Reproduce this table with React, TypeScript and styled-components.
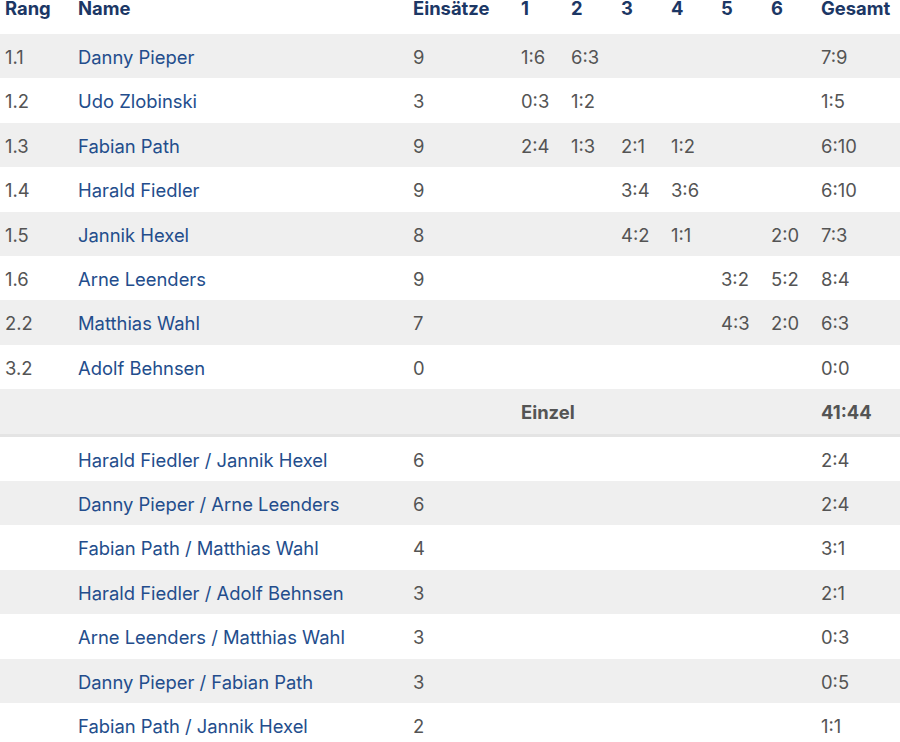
import styled, { createGlobalStyle } from 'styled-components';

const GlobalStyle = createGlobalStyle`
  html, body {
    margin: 0;
    padding: 0;
    background: #ffffff;
    overflow: hidden;
  }

  body {
    font-family: Inter, "Noto Sans", sans-serif;
  }
`;

const Blue = '#234d8c';
const Navy = '#1c3765';
const Gray = '#545454';
const Stripe = '#efefef';

const Table = styled.table`
  width: 900px;
  border-collapse: collapse;
  table-layout: fixed;
  font-size: 18.4px;
`;

const Col = styled.col<{ $w: number }>`
  width: ${(p) => p.$w}px;
`;

const HeadCell = styled.th`
  text-align: left;
  font-weight: 700;
  color: ${Navy};
  padding: 0 5px 18px;
  line-height: 16px;
  white-space: nowrap;
`;

const Row = styled.tr<{ $striped?: boolean; $total?: boolean }>`
  background: ${(p) => (p.$striped ? Stripe : 'transparent')};
  border-bottom: ${(p) => (p.$total ? '3px solid #e4e4e4' : 'none')};
`;

const Cell = styled.td<{ $bold?: boolean }>`
  padding: 10px 5px 8px;
  line-height: 26.4px;
  color: ${Gray};
  font-weight: ${(p) => (p.$bold ? 700 : 400)};
  white-space: nowrap;
`;

const NameCell = styled(Cell)`
  color: ${Blue};
`;

type Player = {
  rang: string;
  name: string;
  einsaetze: number;
  sets: string[];
  total: string;
};

const singles: Player[] = [
  { rang: '1.1', name: 'Danny Pieper', einsaetze: 9, sets: ['1:6', '6:3', '', '', '', ''], total: '7:9' },
  { rang: '1.2', name: 'Udo Zlobinski', einsaetze: 3, sets: ['0:3', '1:2', '', '', '', ''], total: '1:5' },
  { rang: '1.3', name: 'Fabian Path', einsaetze: 9, sets: ['2:4', '1:3', '2:1', '1:2', '', ''], total: '6:10' },
  { rang: '1.4', name: 'Harald Fiedler', einsaetze: 9, sets: ['', '', '3:4', '3:6', '', ''], total: '6:10' },
  { rang: '1.5', name: 'Jannik Hexel', einsaetze: 8, sets: ['', '', '4:2', '1:1', '', '2:0'], total: '7:3' },
  { rang: '1.6', name: 'Arne Leenders', einsaetze: 9, sets: ['', '', '', '', '3:2', '5:2'], total: '8:4' },
  { rang: '2.2', name: 'Matthias Wahl', einsaetze: 7, sets: ['', '', '', '', '4:3', '2:0'], total: '6:3' },
  { rang: '3.2', name: 'Adolf Behnsen', einsaetze: 0, sets: ['', '', '', '', '', ''], total: '0:0' },
];

const doubles = [
  { name: 'Harald Fiedler / Jannik Hexel', einsaetze: 6, total: '2:4' },
  { name: 'Danny Pieper / Arne Leenders', einsaetze: 6, total: '2:4' },
  { name: 'Fabian Path / Matthias Wahl', einsaetze: 4, total: '3:1' },
  { name: 'Harald Fiedler / Adolf Behnsen', einsaetze: 3, total: '2:1' },
  { name: 'Arne Leenders / Matthias Wahl', einsaetze: 3, total: '0:3' },
  { name: 'Danny Pieper / Fabian Path', einsaetze: 3, total: '0:5' },
  { name: 'Fabian Path / Jannik Hexel', einsaetze: 2, total: '1:1' },
];

const headings = ['Rang', 'Name', 'Einsätze', '1', '2', '3', '4', '5', '6', 'Gesamt'];
const widths = [73, 335, 108, 50, 50, 50, 50, 50, 50, 84];

const App = () => (
  <>
    <GlobalStyle />
    <Table>
      <colgroup>
        {widths.map((w, i) => (
          <Col key={i} $w={w} />
        ))}
      </colgroup>
      <thead>
        <tr>
          {headings.map((h) => (
            <HeadCell key={h}>{h}</HeadCell>
          ))}
        </tr>
      </thead>
      <tbody>
        {singles.map((p, i) => (
          <Row key={p.rang} $striped={i % 2 === 0}>
            <Cell>{p.rang}</Cell>
            <NameCell>{p.name}</NameCell>
            <Cell>{p.einsaetze}</Cell>
            {p.sets.map((s, j) => (
              <Cell key={j}>{s}</Cell>
            ))}
            <Cell>{p.total}</Cell>
          </Row>
        ))}
        <Row $striped $total>
          <Cell colSpan={3} />
          <Cell colSpan={6} $bold>
            Einzel
          </Cell>
          <Cell $bold>41:44</Cell>
        </Row>
        {doubles.map((d, i) => (
          <Row key={d.name} $striped={i % 2 === 1}>
            <Cell />
            <NameCell>{d.name}</NameCell>
            <Cell>{d.einsaetze}</Cell>
            <Cell colSpan={6} />
            <Cell>{d.total}</Cell>
          </Row>
        ))}
      </tbody>
    </Table>
  </>
);

export default App;
